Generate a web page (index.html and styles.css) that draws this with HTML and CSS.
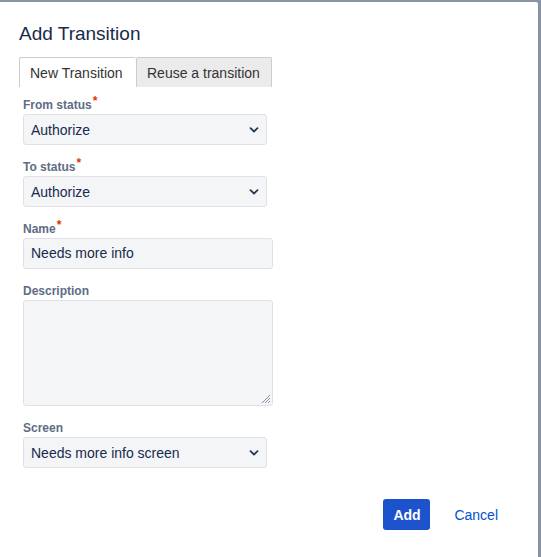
FILE: index.html
```html
<!DOCTYPE html>
<html>
<head>
<meta charset="utf-8">
<link rel="stylesheet" href="styles.css">
</head>
<body>
<div class="frame">
  <div class="dialog">
    <h2 class="title">Add Transition</h2>
    <div class="tabs">
      <div class="tab active">New Transition</div>
      <div class="tab">Reuse a transition</div>
    </div>
    <form class="form">
      <div class="field">
        <label class="label">From status<span class="req">*</span></label>
        <div class="select narrow"><span>Authorize</span><svg class="chev" width="10" height="6" viewBox="0 0 10 6"><path d="M1.5 1.2 L5 4.5 L8.5 1.2" fill="none" stroke="#253858" stroke-width="1.8" stroke-linecap="round" stroke-linejoin="round"/></svg></div>
      </div>
      <div class="field">
        <label class="label">To status<span class="req">*</span></label>
        <div class="select narrow"><span>Authorize</span><svg class="chev" width="10" height="6" viewBox="0 0 10 6"><path d="M1.5 1.2 L5 4.5 L8.5 1.2" fill="none" stroke="#253858" stroke-width="1.8" stroke-linecap="round" stroke-linejoin="round"/></svg></div>
      </div>
      <div class="field">
        <label class="label">Name<span class="req">*</span></label>
        <div class="input">Needs more info</div>
      </div>
      <div class="field">
        <label class="label">Description</label>
        <div class="textarea"><svg class="grip" width="11" height="11" viewBox="0 0 11 11"><path d="M10 2 L2 10 M10 5 L5 10 M10 8 L8 10" stroke="#8a8f99" stroke-width="1" fill="none"/></svg></div>
      </div>
      <div class="field">
        <label class="label">Screen</label>
        <div class="select narrow"><span>Needs more info screen</span><svg class="chev" width="10" height="6" viewBox="0 0 10 6"><path d="M1.5 1.2 L5 4.5 L8.5 1.2" fill="none" stroke="#253858" stroke-width="1.8" stroke-linecap="round" stroke-linejoin="round"/></svg></div>
      </div>
    </form>
    <div class="actions">
      <button class="btn primary" type="button">Add</button>
      <button class="btn link" type="button">Cancel</button>
    </div>
  </div>
</div>
</body>
</html>
```

FILE: styles.css
```css
* { box-sizing: border-box; }
html, body { margin: 0; padding: 0; }
body {
  width: 541px;
  height: 557px;
  background: #8993a4;
  font-family: "Liberation Sans", Arial, sans-serif;
  overflow: hidden;
}
.frame {
  padding-top: 2px;
  padding-right: 3px;
  height: 557px;
}
.dialog {
  background: #fff;
  height: 555px;
  border-top-right-radius: 2px;
  padding: 20px 0 0 19px;
}
.title {
  margin: 0;
  font-size: 19px;
  font-weight: 400;
  color: #172b4d;
  line-height: 23px;
}
.tabs {
  display: flex;
  margin-top: 12px;
  height: 30px;
}
.tab {
  font-size: 14px;
  color: #333;
  padding: 0 10px;
  line-height: 30px;
  border: 1px solid #ccc;
  border-bottom: none;
  background: #ebebeb;
  border-top-left-radius: 2px;
  border-top-right-radius: 2px;
}
.tab.active {
  background: #fff;
  width: 117px;
  border-right: none;
}
.tab + .tab { width: 136px; }
.form {
  padding-left: 4px;
  padding-bottom: 1px;
  margin-top: 9px;
}
.field { margin-bottom: 13px; }
.label {
  display: block;
  font-size: 12px;
  font-weight: 700;
  color: #5e6c84;
  line-height: 16px;
  padding-top: 1px;
  margin-bottom: 1px;
}
.req {
  color: #de350b;
  font-size: 12px;
  position: relative;
  top: -4px;
  margin-left: 1px;
}
.select, .input, .textarea {
  background: #f4f5f7;
  border: 1px solid #dfe1e6;
  border-radius: 3px;
  color: #172b4d;
  font-size: 14px;
}
.select {
  height: 31px;
  width: 244px;
  display: flex;
  align-items: center;
  justify-content: space-between;
  padding: 0 7px 0 7px;
}
.input {
  height: 31px;
  width: 250px;
  line-height: 29px;
  padding-left: 7px;
}
.textarea {
  width: 250px;
  height: 106px;
  position: relative;
}
.grip {
  position: absolute;
  right: 1px;
  bottom: 1px;
}
.actions {
  display: flex;
  justify-content: flex-end;
  align-items: center;
  gap: 12px;
  padding-right: 28px;
  margin-top: 17px;
}
.btn {
  font-family: inherit;
  font-size: 14px;
  border: none;
  border-radius: 3px;
  height: 31px;
  padding: 0 10px;
  cursor: pointer;
}
.btn.primary {
  background: #1c52cc;
  color: #fff;
  font-weight: 700;
  width: 47px;
}
.btn.link {
  background: transparent;
  color: #0052cc;
  padding: 0 12px;
}
```
